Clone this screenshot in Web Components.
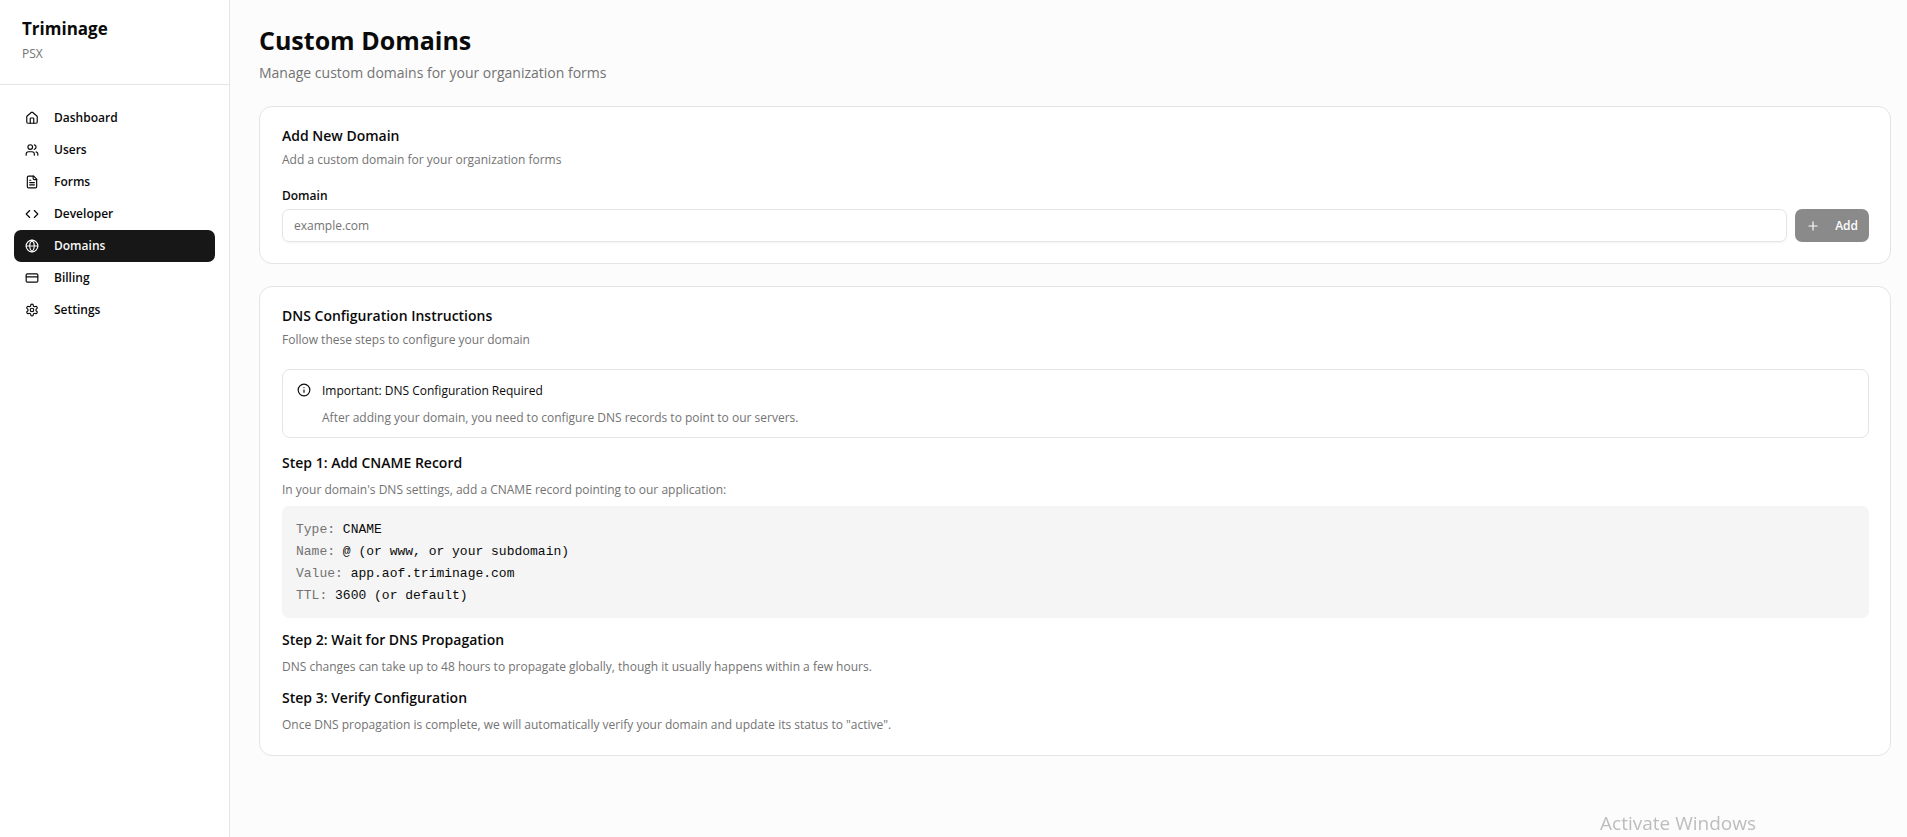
<!DOCTYPE html>
<html lang="en">
<head>
<meta charset="utf-8">
<title>Custom Domains - Triminage</title>
<style>
    :root {
        --background: #fcfcfc;
        --surface: #ffffff;
        --foreground: #0a0a0a;
        --muted: #737373;
        --muted-surface: #f5f5f5;
        --border: #e5e5e5;
        --primary: #171717;
        --font-sans: "Open Sans", "Noto Sans", sans-serif;
        --font-mono: "Liberation Mono", monospace;
    }

    body {
        margin: 0;
        background: var(--background);
        color: var(--foreground);
        font: 400 12px/18px var(--font-sans);
    }
</style>
</head>
<body>

<app-shell>
    <app-sidebar slot="sidebar" name="Triminage" organization="PSX">
        <nav-item icon="house">Dashboard</nav-item>
        <nav-item icon="users">Users</nav-item>
        <nav-item icon="file">Forms</nav-item>
        <nav-item icon="code">Developer</nav-item>
        <nav-item icon="globe" active>Domains</nav-item>
        <nav-item icon="card">Billing</nav-item>
        <nav-item icon="settings">Settings</nav-item>
    </app-sidebar>

    <page-header>
        Custom Domains
        <span slot="description">Manage custom domains for your organization forms</span>
    </page-header>

    <content-card>
        <span slot="title">Add New Domain</span>
        <span slot="description">Add a custom domain for your organization forms</span>
        <domain-form></domain-form>
    </content-card>

    <content-card>
        <span slot="title">DNS Configuration Instructions</span>
        <span slot="description">Follow these steps to configure your domain</span>
        <info-alert>
            <span slot="title">Important: DNS Configuration Required</span>
            After adding your domain, you need to configure DNS records to point to our servers.
        </info-alert>
        <setup-step class="first">
            <span slot="title">Step 1: Add CNAME Record</span>
            In your domain's DNS settings, add a CNAME record pointing to our application:
            <dns-record slot="extra">
                <record-line label="Type:">CNAME</record-line>
                <record-line label="Name:">@ (or www, or your subdomain)</record-line>
                <record-line label="Value:">app.aof.triminage.com</record-line>
                <record-line label="TTL:">3600 (or default)</record-line>
            </dns-record>
        </setup-step>
        <setup-step>
            <span slot="title">Step 2: Wait for DNS Propagation</span>
            DNS changes can take up to 48 hours to propagate globally, though it usually happens within a few hours.
        </setup-step>
        <setup-step>
            <span slot="title">Step 3: Verify Configuration</span>
            Once DNS propagation is complete, we will automatically verify your domain and update its status to "active".
        </setup-step>
    </content-card>

    <system-notice slot="overlay">Activate Windows</system-notice>
</app-shell>

<script>
const ICONS = {
    house: `<path d="M15 21v-8a1 1 0 0 0-1-1h-4a1 1 0 0 0-1 1v8"/><path d="M3 10a2 2 0 0 1 .709-1.528l7-5.999a2 2 0 0 1 2.582 0l7 5.999A2 2 0 0 1 21 10v9a2 2 0 0 1-2 2H5a2 2 0 0 1-2-2z"/>`,
    users: `<path d="M16 21v-2a4 4 0 0 0-4-4H6a4 4 0 0 0-4 4v2"/><circle cx="9" cy="7" r="4"/><path d="M22 21v-2a4 4 0 0 0-3-3.87"/><path d="M16 3.13a4 4 0 0 1 0 7.75"/>`,
    file: `<path d="M15 2H6a2 2 0 0 0-2 2v16a2 2 0 0 0 2 2h12a2 2 0 0 0 2-2V7Z"/><path d="M14 2v4a2 2 0 0 0 2 2h4"/><path d="M10 9H8"/><path d="M16 13H8"/><path d="M16 17H8"/>`,
    code: `<path d="m16 18 6-6-6-6"/><path d="m8 6-6 6 6 6"/>`,
    globe: `<circle cx="12" cy="12" r="10"/><path d="M12 2a14.5 14.5 0 0 0 0 20 14.5 14.5 0 0 0 0-20"/><path d="M2 12h20"/>`,
    card: `<rect x="2" y="5" width="20" height="14" rx="2"/><path d="M2 10h20"/>`,
    settings: `<path d="M12.22 2h-.44a2 2 0 0 0-2 2v.18a2 2 0 0 1-1 1.73l-.43.25a2 2 0 0 1-2 0l-.15-.08a2 2 0 0 0-2.73.73l-.22.38a2 2 0 0 0 .73 2.73l.15.1a2 2 0 0 1 1 1.72v.51a2 2 0 0 1-1 1.74l-.15.09a2 2 0 0 0-.73 2.73l.22.38a2 2 0 0 0 2.73.73l.15-.08a2 2 0 0 1 2 0l.43.25a2 2 0 0 1 1 1.73V20a2 2 0 0 0 2 2h.44a2 2 0 0 0 2-2v-.18a2 2 0 0 1 1-1.73l.43-.25a2 2 0 0 1 2 0l.15.08a2 2 0 0 0 2.73-.73l.22-.39a2 2 0 0 0-.73-2.73l-.15-.08a2 2 0 0 1-1-1.74v-.5a2 2 0 0 1 1-1.74l.15-.09a2 2 0 0 0 .73-2.73l-.22-.38a2 2 0 0 0-2.73-.73l-.15.08a2 2 0 0 1-2 0l-.43-.25a2 2 0 0 1-1-1.73V4a2 2 0 0 0-2-2z"/><circle cx="12" cy="12" r="3"/>`,
    info: `<circle cx="12" cy="12" r="10"/><path d="M12 16v-4"/><path d="M12 8h.01"/>`,
    plus: `<path d="M5 12h14"/><path d="M12 5v14"/>`
};

/** base class, renders the markup of the subclass in an open shadow root */
class BaseComponent extends HTMLElement {

    constructor() {
        super();
        this.attachShadow({ mode: 'open' });
    }

    connectedCallback() {
        this.shadowRoot.innerHTML = this.render();
    }
}

class AppShell extends BaseComponent {
    render() {
        return `
        <style>
            :host {
                display: grid;
                grid-template-columns: 230px minmax(0, 1fr);
                min-height: 100vh;
            }

            main {
                display: flex;
                flex-direction: column;
                gap: 22px;
                padding: 23px 16px 23px 29px;
            }
        </style>
        <slot name="sidebar"></slot>
        <main><slot></slot></main>
        <slot name="overlay"></slot>`;
    }
}

class AppSidebar extends BaseComponent {
    render() {
        return `
        <style>
            :host {
                display: flex;
                flex-direction: column;
                background: var(--surface);
                border-right: 1px solid var(--border);
            }

            header {
                padding: 17px 22px 21px;
                border-bottom: 1px solid var(--border);
            }

            h2 {
                margin: 0 0 4px;
                font-size: 17px;
                font-weight: 700;
                line-height: 24px;
            }

            p {
                margin: 0;
                color: var(--muted);
            }

            nav {
                padding: 17px 14px;
            }
        </style>
        <header>
            <h2>${this.getAttribute('name')}</h2>
            <p>${this.getAttribute('organization')}</p>
        </header>
        <nav><slot></slot></nav>`;
    }
}

class SvgIcon extends BaseComponent {
    render() {
        return `
        <style>
            :host {
                display: inline-flex;
                flex: none;
                width: 14px;
                height: 14px;
            }

            svg {
                width: 100%;
                height: 100%;
                fill: none;
                stroke: currentColor;
                stroke-width: 2;
                stroke-linecap: round;
                stroke-linejoin: round;
            }
        </style>
        <svg viewBox="0 0 24 24" aria-hidden="true">${ICONS[this.getAttribute('name')]}</svg>`;
    }
}

class NavItem extends BaseComponent {
    render() {
        const current = this.hasAttribute('active') ? 'aria-current="page"' : '';
        return `
        <style>
            :host {
                display: block;
            }

            a {
                display: flex;
                align-items: center;
                gap: 15px;
                padding: 7px 11px;
                border-radius: 7px;
                color: var(--foreground);
                font-weight: 600;
                text-decoration: none;
            }

            a:hover {
                background: var(--muted-surface);
            }

            a[aria-current] {
                background: var(--primary);
                color: #fafafa;
            }
        </style>
        <a href="#" ${current}>
            <svg-icon name="${this.getAttribute('icon')}"></svg-icon>
            <slot></slot>
        </a>`;
    }
}

class PageHeader extends BaseComponent {
    render() {
        return `
        <style>
            :host {
                display: block;
            }

            h1 {
                margin: 0 0 6px;
                font-size: 25px;
                font-weight: 700;
                line-height: 34px;
            }

            p {
                margin: 0 0 1px;
                color: var(--muted);
                font-size: 14px;
                line-height: 20px;
            }
        </style>
        <h1><slot></slot></h1>
        <p><slot name="description"></slot></p>`;
    }
}

class ContentCard extends BaseComponent {
    render() {
        return `
        <style>
            :host {
                display: block;
                padding: 22px 21px 21px 22px;
                background: var(--surface);
                border: 1px solid var(--border);
                border-radius: 13px;
            }

            h3 {
                margin: 0 0 8px;
                font-size: 14px;
                font-weight: 600;
                line-height: 14px;
            }

            p {
                margin: 0 0 20px;
                color: var(--muted);
            }
        </style>
        <h3><slot name="title"></slot></h3>
        <p><slot name="description"></slot></p>
        <slot></slot>`;
    }
}

class DomainForm extends BaseComponent {
    render() {
        return `
        <style>
            :host {
                display: block;
            }

            form {
                display: flex;
                align-items: flex-end;
                gap: 8px;
            }

            .field {
                display: flex;
                flex: 1;
                flex-direction: column;
                gap: 6px;
            }

            label {
                font-weight: 600;
                line-height: 14px;
            }

            input {
                box-sizing: border-box;
                width: 100%;
                height: 33px;
                padding: 0 11px;
                background: transparent;
                border: 1px solid var(--border);
                border-radius: 7px;
                box-shadow: 0 1px 2px rgb(0 0 0 / 0.05);
                color: inherit;
                font: inherit;
            }

            input::placeholder {
                color: var(--muted);
            }

            button {
                display: flex;
                align-items: center;
                gap: 15px;
                height: 33px;
                padding: 0 11px;
                background: var(--primary);
                border: 0;
                border-radius: 7px;
                color: #fafafa;
                font: inherit;
                font-weight: 600;
            }

            button:disabled {
                opacity: 0.5;
            }
        </style>
        <form>
            <div class="field">
                <label for="domain">Domain</label>
                <input id="domain" type="text" placeholder="example.com">
            </div>
            <button type="submit" disabled><svg-icon name="plus"></svg-icon>Add</button>
        </form>`;
    }
}

class InfoAlert extends BaseComponent {
    render() {
        return `
        <style>
            :host {
                display: grid;
                grid-template-columns: 14px 1fr;
                column-gap: 11px;
                row-gap: 9px;
                padding: 12px 14px 10px;
                border: 1px solid var(--border);
                border-radius: 8px;
            }

            svg-icon {
                margin-top: 1px;
            }

            h4, p {
                grid-column: 2;
                margin: 0;
            }

            h4 {
                font-size: 12px;
                font-weight: 500;
            }

            p {
                color: var(--muted);
            }
        </style>
        <svg-icon name="info"></svg-icon>
        <h4><slot name="title"></slot></h4>
        <p><slot></slot></p>`;
    }
}

class SetupStep extends BaseComponent {
    render() {
        return `
        <style>
            :host {
                display: block;
                margin-top: 12px;
            }

            :host(.first) {
                margin-top: 15px;
            }

            h4 {
                margin: 0 0 8px;
                font-size: 14px;
                font-weight: 600;
                line-height: 20px;
            }

            p {
                margin: 0;
                color: var(--muted);
            }
        </style>
        <h4><slot name="title"></slot></h4>
        <p><slot></slot></p>
        <slot name="extra"></slot>`;
    }
}

class DnsRecord extends BaseComponent {
    render() {
        return `
        <style>
            :host {
                display: block;
                margin-top: 7px;
                padding: 13px 14px 11px;
                background: var(--muted-surface);
                border-radius: 7px;
                font: 13px/22px var(--font-mono);
            }
        </style>
        <slot></slot>`;
    }
}

class RecordLine extends BaseComponent {
    render() {
        return `
        <style>
            :host {
                display: block;
            }

            span {
                color: var(--muted);
            }
        </style>
        <span>${this.getAttribute('label')}</span> <slot></slot>`;
    }
}

/** notice of the operating system that floats over the page */
class SystemNotice extends BaseComponent {
    render() {
        return `
        <style>
            :host {
                position: fixed;
                right: 151px;
                bottom: 0;
                color: #bdbdbd;
                font-size: 19px;
                line-height: 28px;
                pointer-events: none;
            }
        </style>
        <slot></slot>`;
    }
}

customElements.define('app-shell', AppShell);
customElements.define('app-sidebar', AppSidebar);
customElements.define('svg-icon', SvgIcon);
customElements.define('nav-item', NavItem);
customElements.define('page-header', PageHeader);
customElements.define('content-card', ContentCard);
customElements.define('domain-form', DomainForm);
customElements.define('info-alert', InfoAlert);
customElements.define('setup-step', SetupStep);
customElements.define('dns-record', DnsRecord);
customElements.define('record-line', RecordLine);
customElements.define('system-notice', SystemNotice);
</script>
</body>
</html>
